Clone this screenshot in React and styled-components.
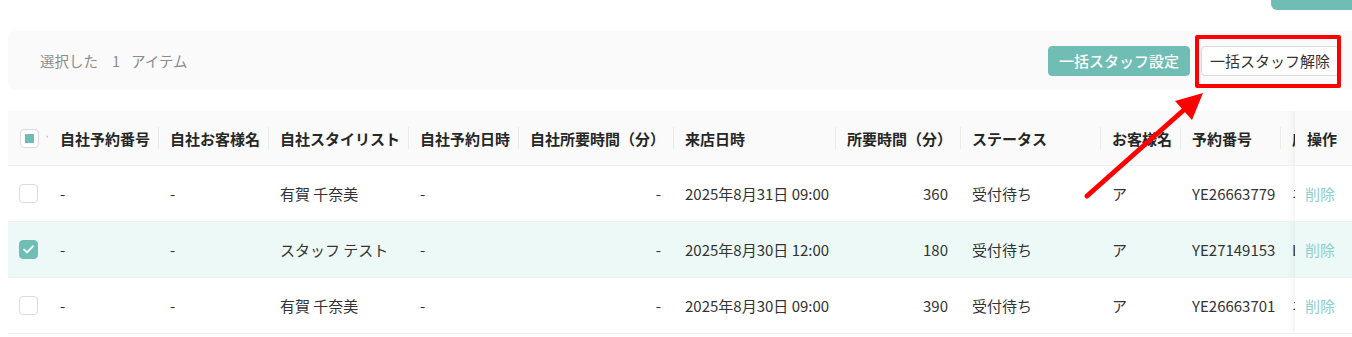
import React from 'react'
import styled, { createGlobalStyle, css } from 'styled-components'

const teal = '#70bdb5'

const GlobalStyle = createGlobalStyle`
	html, body {
		margin: 0;
		padding: 0;
		background: #fff;
	}
	body {
		font-family: "Noto Sans CJK JP", "Noto Sans", sans-serif;
		color: #333;
	}
`

const Page = styled.div`
	position: relative;
	width: 1352px;
	height: 337px;
	overflow: hidden;
	padding-left: 8px;
	box-sizing: border-box;
`

const TopBar = styled.div`
	display: flex;
	justify-content: flex-end;
	height: 10px;
	margin-bottom: 21px;
`

const TopButtonEdge = styled.div`
	width: 81px;
	height: 10px;
	background: ${teal};
	border-bottom-left-radius: 6px;
`

const Toolbar = styled.div`
	display: flex;
	align-items: center;
	justify-content: space-between;
	height: 59px;
	padding: 0 13px 0 32px;
	background: #fafafa;
	border-radius: 8px 0 0 8px;
`

const Selected = styled.div`
	font-size: 14.5px;
	color: #8c8c8c;
	display: flex;
	align-items: center;
`

const Count = styled.span`
	margin: 0 11px 0 14px;
`

const Actions = styled.div`
	display: flex;
	gap: 11px;
`

const Button = styled.button`
	height: 30px;
	padding: 0 10px;
	border-radius: 4px;
	font-family: inherit;
	font-size: 15px;
	white-space: nowrap;
	cursor: pointer;
	${p =>
		p.$primary
			? css`
					background: ${teal};
					border: 1px solid ${teal};
					color: #fff;
					font-weight: 500;
			  `
			: css`
					background: #fff;
					border: 1px solid #d9d9d9;
					color: #333;
					padding: 0 8px;
			  `}
`

const Table = styled.div`
	margin-top: 21px;
	display: grid;
	grid-template-columns: 40px 110px 110px 140px 110px 155px 162px 125px 140px 80px 100px 15px 57px;
	font-size: 15px;
`

const Row = styled.div`
	display: contents;
`

const fixedShadow = css`
	overflow: visible;
	&::after {
		content: '';
		position: absolute;
		left: -10px;
		top: 0;
		bottom: 0;
		width: 10px;
		box-shadow: inset -8px 0 8px -8px rgba(0, 0, 0, 0.08);
	}
`

const HeadCell = styled.div`
	position: relative;
	display: flex;
	align-items: center;
	height: 54px;
	padding: 0 ${p => (p.$pad === undefined ? 12 : p.$pad)}px;
	background: #fafafa;
	border-bottom: 1px solid #f0f0f0;
	font-weight: 700;
	color: #262626;
	white-space: nowrap;
	overflow: hidden;

	${p =>
		p.$sep &&
		css`
			&::before {
				content: '';
				position: absolute;
				left: 0;
				top: 50%;
				width: 1px;
				height: 22px;
				transform: translateY(-50%);
				background: #ebebeb;
			}
		`}

	${p => p.$fixed && fixedShadow}
`

const Cell = styled.div`
	position: relative;
	display: flex;
	align-items: center;
	height: 55px;
	padding: 0 ${p => (p.$pad === undefined ? 12 : p.$pad)}px;
	background: ${p => (p.$selected ? '#ecf9f7' : '#fff')};
	border-bottom: 1px solid #f0f0f0;
	white-space: nowrap;
	overflow: hidden;
	justify-content: ${p => (p.$right ? 'flex-end' : 'flex-start')};
	color: ${p => (p.$link ? '#8dcfd0' : '#333')};

	${p => p.$fixed && fixedShadow}
`

const Box = styled.span`
	display: inline-flex;
	align-items: center;
	justify-content: center;
	box-sizing: border-box;
	width: 19px;
	height: 19px;
	border-radius: 4px;
	border: 1px solid ${p => (p.$checked ? teal : '#dcdcdc')};
	background: ${p => (p.$checked ? teal : '#fff')};
	flex-shrink: 0;
`

const Indeterminate = styled.span`
	width: 9px;
	height: 9px;
	background: ${teal};
`

const Chevron = styled.svg`
	margin-left: 7px;
	flex-shrink: 0;
`

const Annotation = styled.div`
	position: absolute;
	left: 1195px;
	top: 35px;
	width: 146px;
	height: 53px;
	box-sizing: border-box;
	border: 4px solid #ff0000;
	border-radius: 2px;
	pointer-events: none;
`

const ArrowLayer = styled.svg`
	position: absolute;
	left: 0;
	top: 0;
	pointer-events: none;
`

const columns = [
	{ title: '自社予約番号', key: 'ownNo' },
	{ title: '自社お客様名', key: 'ownName' },
	{ title: '自社スタイリスト', key: 'stylist' },
	{ title: '自社予約日時', key: 'ownDate' },
	{ title: '自社所要時間（分）', key: 'ownMin', right: true },
	{ title: '来店日時', key: 'visit' },
	{ title: '所要時間（分）', key: 'minutes', right: true },
	{ title: 'ステータス', key: 'status' },
	{ title: 'お客様名', key: 'customer' },
	{ title: '予約番号', key: 'resNo' },
	{ title: '店', key: 'shop' },
]

const rows = [
	{ id: 1, ownNo: '-', ownName: '-', stylist: '有賀 千奈美', ownDate: '-', ownMin: '-', visit: '2025年8月31日 09:00', minutes: '360', status: '受付待ち', customer: 'ア', resNo: 'YE26663779', shop: 'ネ' },
	{ id: 2, selected: true, ownNo: '-', ownName: '-', stylist: 'スタッフ テスト', ownDate: '-', ownMin: '-', visit: '2025年8月30日 12:00', minutes: '180', status: '受付待ち', customer: 'ア', resNo: 'YE27149153', shop: 'L' },
	{ id: 3, ownNo: '-', ownName: '-', stylist: '有賀 千奈美', ownDate: '-', ownMin: '-', visit: '2025年8月30日 09:00', minutes: '390', status: '受付待ち', customer: 'ア', resNo: 'YE26663701', shop: 'ネ' },
]

const Check = () => (
	<svg width="11" height="9" viewBox="0 0 11 9">
		<path d="M1.2 4.6 L4.1 7.4 L9.8 1.4" fill="none" stroke="#fff" strokeWidth="2" strokeLinecap="round" strokeLinejoin="round" />
	</svg>
)

const App = () => {
	return (
		<Page>
			<GlobalStyle />
			<TopBar>
				<TopButtonEdge />
			</TopBar>

			<Toolbar>
				<Selected>
					選択した<Count>1</Count>アイテム
				</Selected>
				<Actions>
					<Button $primary>一括スタッフ設定</Button>
					<Button>一括スタッフ解除</Button>
				</Actions>
			</Toolbar>

			<Table>
				<Row>
					<HeadCell $pad={12}>
						<Box>
							<Indeterminate />
						</Box>
						<Chevron width="9" height="6" viewBox="0 0 9 6">
							<path d="M0.5 0.8 L4.5 4.8 L8.5 0.8" fill="none" stroke="#bdbdbd" strokeWidth="1.1" />
						</Chevron>
					</HeadCell>
					{columns.map((c, i) => (
						<HeadCell key={c.key} $sep={i > 0}>
							{c.title}
						</HeadCell>
					))}
					<HeadCell $fixed>操作</HeadCell>
				</Row>

				{rows.map(r => (
					<Row key={r.id}>
						<Cell $selected={r.selected} $pad={11}>
							<Box $checked={r.selected}>{r.selected && <Check />}</Box>
						</Cell>
						{columns.map(c => (
							<Cell key={c.key} $selected={r.selected} $right={c.right}>
								{r[c.key]}
							</Cell>
						))}
						<Cell $selected={r.selected} $fixed $pad={10} $link>
							削除
						</Cell>
					</Row>
				))}
			</Table>

			<Annotation />
			<ArrowLayer width="1352" height="337" viewBox="0 0 1352 337">
				<line x1="1087" y1="196" x2="1186" y2="108" stroke="#ff0000" strokeWidth="5" strokeLinecap="round" />
				<polygon points="1203,93 1175,101 1192,120" fill="#ff0000" />
			</ArrowLayer>
		</Page>
	)
}

export default App
